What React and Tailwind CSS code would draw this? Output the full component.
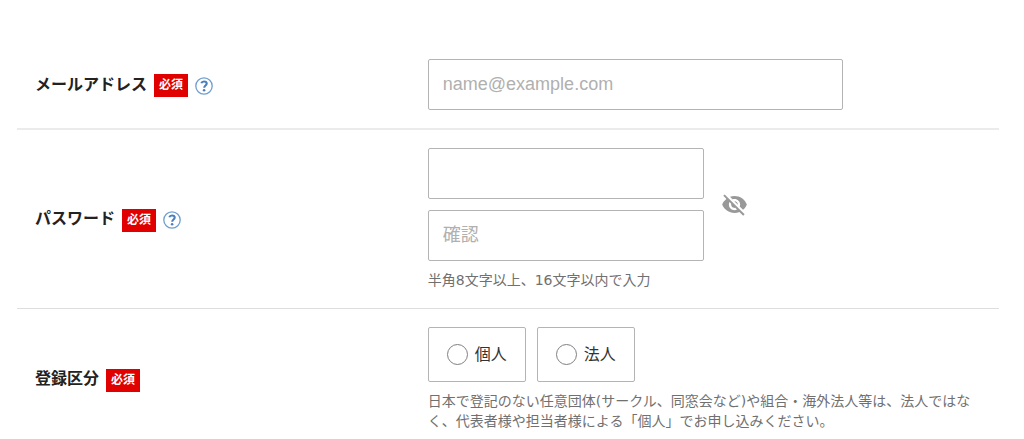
import { useState } from "react";
import { MdVisibility, MdVisibilityOff } from "react-icons/md";

const fieldClass =
  "block h-[51px] rounded-xs border border-[#b4b4b4] bg-white px-3.5 text-lg text-[#333] placeholder:text-[#b0b0b0]";

function HelpButton({ label }) {
  return (
    <button type="button" aria-label={label} className="mt-0.5 block">
      <svg viewBox="0 0 18 18" className="size-[18px]" fill="none" aria-hidden="true">
        <circle cx="9" cy="9" r="8.2" fill="#fff" stroke="#6f9fce" strokeWidth="1.3" />
        <path
          d="M6.3 6.3C6.7 5 7.8 4.5 9 4.5c1.6 0 2.7.8 2.7 2.1 0 1.9-2.5 2-2.5 4.2"
          stroke="#4a7fbc"
          strokeWidth="2.1"
        />
        <circle cx="9.1" cy="13.3" r="1.3" fill="#4a7fbc" />
      </svg>
    </button>
  );
}

function Row({ id, label, htmlFor, help, children }) {
  const Label = htmlFor ? "label" : "span";
  return (
    <div className="grid grid-cols-[40%_60%] items-center border-b border-[#dedede] py-[18px] first:border-b-2 first:border-[#ebebeb] last:border-b-0">
      <div className="flex items-center gap-[7px] pl-[18px]">
        <Label id={id} htmlFor={htmlFor} className="text-base font-bold text-[#222]">
          {label}
        </Label>
        <span className="mt-0.5 bg-[#e00000] px-1 text-xs leading-[23px] font-bold text-white">
          <span className="px-px">必須</span>
        </span>
        {help && <HelpButton label={help} />}
      </div>
      <div className="px-[18px]">{children}</div>
    </div>
  );
}

function Option({ value, children }) {
  return (
    <label className="flex h-[55px] items-center gap-[7px] rounded-xs border border-[#b4b4b4] px-[18px] text-base text-[#333]">
      <input
        type="radio"
        name="category"
        value={value}
        className="size-[21px] appearance-none rounded-full border border-[#808080] bg-white checked:border-[6px]"
      />
      {children}
    </label>
  );
}

export default function App() {
  const [visible, setVisible] = useState(false);
  const type = visible ? "text" : "password";
  const Eye = visible ? MdVisibility : MdVisibilityOff;

  return (
    <form className="bg-white pt-[41px] pr-[25px] pl-[17px] font-['DejaVu_Sans','Noto_Sans_CJK_JP',sans-serif]">
      <Row label="メールアドレス" htmlFor="email" help="メールアドレスについて">
        <input
          id="email"
          type="email"
          placeholder="name@example.com"
          className={`${fieldClass} w-3/4 font-['Liberation_Sans','Noto_Sans_CJK_JP',sans-serif]`}
        />
      </Row>
      <Row label="パスワード" htmlFor="password" help="パスワードについて">
        <div className="flex items-center gap-[17px]">
          <div className="flex w-1/2 flex-col gap-[11px]">
            <input id="password" type={type} className={`${fieldClass} w-full`} />
            <input
              type={type}
              aria-label="パスワード確認"
              placeholder="確認"
              className={`${fieldClass} w-full font-['Liberation_Sans','Noto_Sans_CJK_JP',sans-serif]`}
            />
          </div>
          <button
            type="button"
            aria-label="パスワードの表示切り替え"
            onClick={() => setVisible(!visible)}
            className="text-[#999]"
          >
            <Eye className="size-[27px]" />
          </button>
        </div>
        <p className="mt-[9px] text-sm leading-5 text-[#707070]">半角8文字以上、16文字以内で入力</p>
      </Row>
      <Row id="category-label" label="登録区分">
        <div role="radiogroup" aria-labelledby="category-label" className="flex gap-[11px]">
          <Option value="personal">個人</Option>
          <Option value="corporate">法人</Option>
        </div>
        <p className="mt-[9px] text-sm leading-5 text-[#707070]">
          日本で登記のない任意団体(サークル、同窓会など)や組合・海外法人等は、法人ではなく、代表者様や担当者様による「個人」でお申し込みください。
        </p>
      </Row>
    </form>
  );
}
